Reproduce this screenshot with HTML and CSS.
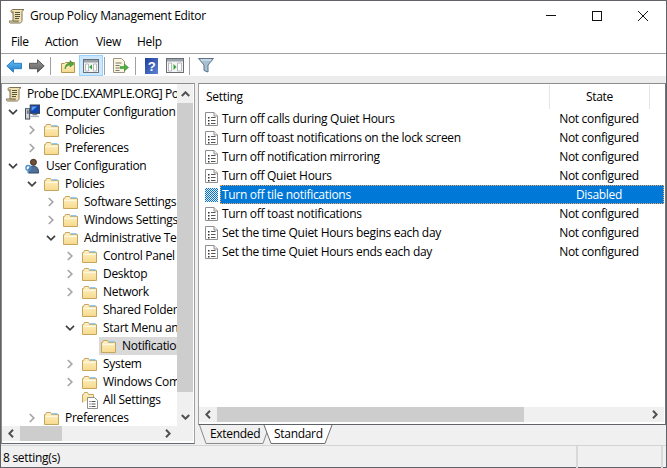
FILE: index.html
```html
<!DOCTYPE html>
<html lang="en">
<head>
<meta charset="utf-8">
<title>Group Policy Management Editor</title>
<link rel="stylesheet" href="styles.css">
</head>
<body>
<svg class="defs" aria-hidden="true">
  <defs>
    <linearGradient id="gf" x1="0" y1="0" x2="0" y2="1"><stop offset="0" stop-color="#fff2c8"/><stop offset="1" stop-color="#f6d98c"/></linearGradient>
    <linearGradient id="gb" x1="0" y1="0" x2="0" y2="1"><stop offset="0" stop-color="#6cc4f5"/><stop offset="1" stop-color="#1a78c8"/></linearGradient>
    <linearGradient id="gg" x1="0" y1="0" x2="0" y2="1"><stop offset="0" stop-color="#9a9a9a"/><stop offset="1" stop-color="#5c5c5c"/></linearGradient>
    <linearGradient id="gh" x1="0" y1="0" x2="1" y2="1"><stop offset="0" stop-color="#1e3f96"/><stop offset="1" stop-color="#5d83d8"/></linearGradient>
    <pattern id="dith" width="2" height="2" patternUnits="userSpaceOnUse"><rect width="2" height="2" fill="#0d6fc4"/><rect width="1" height="1" fill="#dfeefa"/><rect x="1" y="1" width="1" height="1" fill="#dfeefa"/></pattern>
    <symbol id="i-folder" viewBox="0 0 15 13">
      <path d="M.5 12.500V2.500h1l1-2h4l1 2h7v10z" fill="url(#gf)" stroke="#c6a55e"/>
      <path d="M8 1h5.500v1.500H8z" fill="#8ec8ee"/>
      <path d="M1.500 4.500h12" stroke="#fff8e0"/>
    </symbol>
    <symbol id="i-scroll" viewBox="0 0 16 16">
      <path d="M3.500 1.500h11.500c-1.500 1-2 2-2 3v8c0 1.500-1 2.500-2.500 2.500h-9c-1 0-1.500-1-1.500-2h8c.5 0 1 .5 1 1" fill="#f1e2b4" stroke="#7d7254"/>
      <path d="M3.500 1.500c-1 0-1.500 1-1.500 2 0 1 1 1.500 2 1.500M4 3v10h6" fill="#e8d6a0" stroke="#7d7254"/>
      <path d="M6 4.500h5M6 6.500h5M6 8.500h5M6 10.500h4" stroke="#55523f"/>
    </symbol>
    <symbol id="i-computer" viewBox="0 0 16 16">
      <rect x="5.500" y=".5" width="10" height="9" fill="#0e46b4" stroke="#3a424c"/>
      <path d="M7 2h6l-6 5z" fill="#5f9df0"/>
      <path d="M8 10h5v1.500H8z" fill="#6f7a86"/>
      <path d="M6 12h9v1.500H6z" fill="#aab2bb"/>
      <rect x=".5" y="4.500" width="4.500" height="11" fill="#cfd5dc" stroke="#3a424c"/>
      <path d="M2 7h2M2 9h2" stroke="#1f2a36"/>
    </symbol>
    <symbol id="i-user" viewBox="0 0 16 16">
      <circle cx="9" cy="4" r="3.200" fill="#6d5138" stroke="#3f2e1e"/>
      <path d="M3.500 15.500c0-5 2-7.500 5.500-7.500s5.500 2.500 5.500 7.500z" fill="#4f6f98" stroke="#2e4260"/>
      <circle cx="3.500" cy="10" r="2.500" fill="none" stroke="#4b93cf" stroke-width="1.500"/>
      <path d="M3.500 12v3.500" stroke="#4b93cf" stroke-width="1.500"/>
    </symbol>
    <symbol id="i-sheet" viewBox="0 0 13 14">
      <path d="M.5.500h8.500l3.500 3.500v9.500H.5z" fill="#fff" stroke="#8f8f8f"/>
      <path d="M9 .5v3.500h3.500" fill="#eee" stroke="#8f8f8f"/>
      <path d="M3 5h1.500v1.500H3zM3 8h1.500v1.500H3zM3 11h1.500v1.500H3z" fill="#333"/>
      <path d="M6 5.500h4.500M6 8.500h4.500M6 11.500h4.500" stroke="#555"/>
    </symbol>
    <symbol id="i-allset" viewBox="0 0 16 17">
      <path d="M.5 10.500V2.500h1l1-2h3l1 2h5v3" fill="url(#gf)" stroke="#c6a55e"/>
      <path d="M5.500 5.500h7l3 3v8h-10z" fill="#fff" stroke="#8f8f8f"/>
      <path d="M7.500 9h1v1h-1zM7.500 11.500h1v1h-1zM7.500 14h1v1h-1z" fill="#333"/>
      <path d="M9.500 9.500h4M9.500 12h4M9.500 14.500h4" stroke="#555"/>
    </symbol>
    <symbol id="c-down" viewBox="0 0 10 6"><path d="M1 .8l4 4 4-4" fill="none" stroke="#404040" stroke-width="1.700"/></symbol>
    <symbol id="c-right" viewBox="0 0 6 10"><path d="M.8 1l4 4-4 4" fill="none" stroke="#a6a6a6" stroke-width="1.700"/></symbol>
    <symbol id="s-up" viewBox="0 0 9 6"><path d="M.8 5l3.700-3.700L8.200 5" fill="none" stroke="#505050" stroke-width="2"/></symbol>
    <symbol id="s-down" viewBox="0 0 9 6"><path d="M.8 1l3.700 3.700L8.200 1" fill="none" stroke="#505050" stroke-width="2"/></symbol>
    <symbol id="s-left" viewBox="0 0 6 9"><path d="M5 .8L1.300 4.500 5 8.200" fill="none" stroke="#505050" stroke-width="2"/></symbol>
    <symbol id="s-right" viewBox="0 0 6 9"><path d="M1 .8l3.700 3.700L1 8.200" fill="none" stroke="#505050" stroke-width="2"/></symbol>
  </defs>
</svg>

<div class="window">
  <header class="titlebar">
    <svg class="ico-title"><use href="#i-scroll"/></svg>
    <span class="title-text">Group Policy Management Editor</span>
    <div class="caption">
      <span class="cap-btn"><svg class="cap-ico" viewBox="0 0 10 10"><path d="M0 4.500h10" stroke="#111"/></svg></span>
      <span class="cap-btn"><svg class="cap-ico" viewBox="0 0 10 10"><rect x=".5" y=".5" width="9" height="9" fill="none" stroke="#111"/></svg></span>
      <span class="cap-btn"><svg class="cap-ico" viewBox="0 0 10 10"><path d="M0 0l10 10M10 0L0 10" stroke="#111"/></svg></span>
    </div>
  </header>

  <nav class="menubar">
    <span class="menu-item">File</span>
    <span class="menu-item">Action</span>
    <span class="menu-item">View</span>
    <span class="menu-item">Help</span>
  </nav>

  <div class="toolbar">
    <span class="tool tool-back"><svg class="tool-ico" viewBox="0 0 16 14"><path d="M.8 7L7.500.8v3.500h8v5.400h-8v3.500z" fill="url(#gb)" stroke="#2f80c8"/></svg></span>
    <span class="tool tool-fwd"><svg class="tool-ico" viewBox="0 0 16 14"><path d="M15.200 7L8.500.8v3.500h-8v5.400h8v3.500z" fill="url(#gg)" stroke="#5a5a5a"/></svg></span>
    <span class="tool-sep sep-a"></span>
    <span class="tool tool-up"><svg class="tool-ico" viewBox="0 0 16 16"><path d="M1.500 14.500V5.500h3l1-1h9v10z" fill="url(#gf)" stroke="#b3954f"/><path d="M5 11c0-4 2-6 5-6V2.500l4 3.500-4 3V7c-2 0-3.500 1-5 4z" fill="#55a83c" stroke="#2e7d22" stroke-width=".5"/></svg></span>
    <span class="tool tool-on"><svg class="tool-ico" viewBox="0 0 16 14"><rect x=".5" y=".5" width="15" height="13" fill="#f4f4f4" stroke="#6a6f75"/><path d="M1 1h14v2.500H1z" fill="#9aa3ac"/><path d="M2.500 5h3v7h-3zM10.500 5h3v7h-3z" fill="#fff" stroke="#8c9298" stroke-width=".6"/><path d="M9 5.500v5L6 8z" fill="#35a435"/></svg></span>
    <span class="tool-sep sep-b"></span>
    <span class="tool tool-exp"><svg class="tool-ico" viewBox="0 0 16 15"><path d="M.5.500h8l3 3v11H.5z" fill="#fdf6df" stroke="#9b9585"/><path d="M2.500 5h6M2.500 7.500h4M2.500 10h4M2.500 12.500h4" stroke="#77756c"/><path d="M7 8.500h4.500V6l4 3.500-4 3.500v-2.500H7z" fill="#52b043" stroke="#2f8a2a" stroke-width=".5"/></svg></span>
    <span class="tool-sep sep-c"></span>
    <span class="tool tool-help"><svg class="tool-ico" viewBox="0 0 13 16"><rect width="13" height="16" fill="url(#gh)"/><text x="6.500" y="13" class="help-mark">?</text></svg></span>
    <span class="tool tool-act"><svg class="tool-ico" viewBox="0 0 18 15"><rect x=".5" y=".5" width="17" height="14" fill="#f4f4f4" stroke="#6a6f75"/><path d="M1 1h16v2.500H1z" fill="#9aa3ac"/><path d="M2.500 5h3v8h-3zM11.500 5h4v8h-4z" fill="#fff" stroke="#8c9298" stroke-width=".6"/><path d="M7.500 6v6L10.500 9z" fill="#35a435"/></svg></span>
    <span class="tool-sep sep-d"></span>
    <span class="tool tool-filter"><svg class="tool-ico" viewBox="0 0 16 15"><path d="M.5.500h15L10 7v7l-4-1.500V7z" fill="#a9c0d3" stroke="#5f7488"/><path d="M3 2h10" stroke="#e4eef5"/></svg></span>
  </div>
  <div class="band"></div>

  <main class="panes">
    <section class="pane pane-tree">
      <div class="tree-body">
        <div class="tree">
          <div class="node root"><svg class="n-ico scroll"><use href="#i-scroll"/></svg><span class="n-label">Probe [DC.EXAMPLE.ORG] Policy</span></div>
          <div class="node d1"><svg class="chev down"><use href="#c-down"/></svg><span class="n-main"><svg class="n-ico"><use href="#i-computer"/></svg><span class="n-label">Computer Configuration</span></span></div>
          <div class="node d2"><svg class="chev right"><use href="#c-right"/></svg><span class="n-main"><svg class="n-ico"><use href="#i-folder"/></svg><span class="n-label">Policies</span></span></div>
          <div class="node d2"><svg class="chev right"><use href="#c-right"/></svg><span class="n-main"><svg class="n-ico"><use href="#i-folder"/></svg><span class="n-label">Preferences</span></span></div>
          <div class="node d1"><svg class="chev down"><use href="#c-down"/></svg><span class="n-main"><svg class="n-ico"><use href="#i-user"/></svg><span class="n-label">User Configuration</span></span></div>
          <div class="node d2"><svg class="chev down"><use href="#c-down"/></svg><span class="n-main"><svg class="n-ico"><use href="#i-folder"/></svg><span class="n-label">Policies</span></span></div>
          <div class="node d3"><svg class="chev right"><use href="#c-right"/></svg><span class="n-main"><svg class="n-ico"><use href="#i-folder"/></svg><span class="n-label">Software Settings</span></span></div>
          <div class="node d3"><svg class="chev right"><use href="#c-right"/></svg><span class="n-main"><svg class="n-ico"><use href="#i-folder"/></svg><span class="n-label">Windows Settings</span></span></div>
          <div class="node d3"><svg class="chev down"><use href="#c-down"/></svg><span class="n-main"><svg class="n-ico"><use href="#i-folder"/></svg><span class="n-label">Administrative Templates</span></span></div>
          <div class="node d4"><svg class="chev right"><use href="#c-right"/></svg><span class="n-main"><svg class="n-ico"><use href="#i-folder"/></svg><span class="n-label">Control Panel</span></span></div>
          <div class="node d4"><svg class="chev right"><use href="#c-right"/></svg><span class="n-main"><svg class="n-ico"><use href="#i-folder"/></svg><span class="n-label">Desktop</span></span></div>
          <div class="node d4"><svg class="chev right"><use href="#c-right"/></svg><span class="n-main"><svg class="n-ico"><use href="#i-folder"/></svg><span class="n-label">Network</span></span></div>
          <div class="node d4"><span class="chev-blank"></span><span class="n-main"><svg class="n-ico"><use href="#i-folder"/></svg><span class="n-label">Shared Folders</span></span></div>
          <div class="node d4"><svg class="chev down"><use href="#c-down"/></svg><span class="n-main"><svg class="n-ico"><use href="#i-folder"/></svg><span class="n-label">Start Menu and Taskbar</span></span></div>
          <div class="node d5 sel"><span class="chev-blank"></span><span class="n-main"><svg class="n-ico"><use href="#i-folder"/></svg><span class="n-label">Notifications</span></span></div>
          <div class="node d4"><svg class="chev right"><use href="#c-right"/></svg><span class="n-main"><svg class="n-ico"><use href="#i-folder"/></svg><span class="n-label">System</span></span></div>
          <div class="node d4"><svg class="chev right"><use href="#c-right"/></svg><span class="n-main"><svg class="n-ico"><use href="#i-folder"/></svg><span class="n-label">Windows Components</span></span></div>
          <div class="node d4"><span class="chev-blank"></span><span class="n-main"><svg class="n-ico n-ico-all"><use href="#i-allset"/></svg><span class="n-label label-all">All Settings</span></span></div>
          <div class="node d2"><svg class="chev right"><use href="#c-right"/></svg><span class="n-main"><svg class="n-ico"><use href="#i-folder"/></svg><span class="n-label">Preferences</span></span></div>
        </div>
        <div class="vbar">
          <span class="sb-btn"><svg class="sb-h"><use href="#s-up"/></svg></span>
          <span class="vthumb"></span>
          <span class="vrest"></span>
          <span class="sb-btn"><svg class="sb-h"><use href="#s-down"/></svg></span>
        </div>
      </div>
      <div class="hbar hbar-tree">
        <span class="sb-btn-h"><svg class="sb-v"><use href="#s-left"/></svg></span>
        <span class="hthumb thumb-tree"></span>
        <span class="hrest"></span>
        <span class="sb-btn-h"><svg class="sb-v"><use href="#s-right"/></svg></span>
        <span class="corner"></span>
      </div>
    </section>

    <div class="right-col">
      <section class="pane pane-list">
        <div class="list-head">
          <span class="col-setting">Setting</span>
          <span class="col-state">State</span>
        </div>
        <div class="list">
          <div class="row"><svg class="r-ico"><use href="#i-sheet"/></svg><div class="r-body"><span class="r-name">Turn off calls during Quiet Hours</span><span class="r-state">Not configured</span></div></div>
          <div class="row"><svg class="r-ico"><use href="#i-sheet"/></svg><div class="r-body"><span class="r-name">Turn off toast notifications on the lock screen</span><span class="r-state">Not configured</span></div></div>
          <div class="row"><svg class="r-ico"><use href="#i-sheet"/></svg><div class="r-body"><span class="r-name">Turn off notification mirroring</span><span class="r-state">Not configured</span></div></div>
          <div class="row"><svg class="r-ico"><use href="#i-sheet"/></svg><div class="r-body"><span class="r-name">Turn off Quiet Hours</span><span class="r-state">Not configured</span></div></div>
          <div class="row selected"><svg class="r-ico" viewBox="0 0 13 14"><rect width="13" height="14" fill="url(#dith)"/></svg><div class="r-body"><span class="r-name">Turn off tile notifications</span><span class="r-state">Disabled</span></div></div>
          <div class="row"><svg class="r-ico"><use href="#i-sheet"/></svg><div class="r-body"><span class="r-name">Turn off toast notifications</span><span class="r-state">Not configured</span></div></div>
          <div class="row"><svg class="r-ico"><use href="#i-sheet"/></svg><div class="r-body"><span class="r-name">Set the time Quiet Hours begins each day</span><span class="r-state">Not configured</span></div></div>
          <div class="row"><svg class="r-ico"><use href="#i-sheet"/></svg><div class="r-body"><span class="r-name">Set the time Quiet Hours ends each day</span><span class="r-state">Not configured</span></div></div>
        </div>
        <div class="hbar hbar-list">
          <span class="sb-btn-h"><svg class="sb-v"><use href="#s-left"/></svg></span>
          <span class="hthumb thumb-list"></span>
          <span class="hrest"></span>
          <span class="sb-btn-h"><svg class="sb-v"><use href="#s-right"/></svg></span>
        </div>
      </section>
      <div class="tabs">
        <span class="tab tab-ext">
          <svg class="tab-shape" viewBox="0 0 72 19"><path d="M.5 0L7 18.500H64L70.500 0" fill="#f0f0f0" stroke="#8a8a8a"/></svg>
          <span class="tab-text">Extended</span>
        </span>
        <span class="tab tab-std">
          <svg class="tab-shape" viewBox="0 0 70 19"><path d="M1 0L8 18.500H62L69 0" fill="#fff" stroke="#6e6e6e"/></svg>
          <span class="tab-text">Standard</span>
        </span>
      </div>
    </div>
  </main>

  <footer class="status">
    <span class="st-main">8 setting(s)</span>
    <span class="st-mid"></span>
    <span class="st-end"></span>
  </footer>
</div>
</body>
</html>
```

FILE: styles.css
```css
* { box-sizing: border-box; }
html, body { margin: 0; padding: 0; background: #f0f0f0; overflow: hidden; }
body { font: 12px/16px "Open Sans", "Liberation Sans", sans-serif; color: #000; letter-spacing: -0.3px; }
.defs { width: 0; height: 0; display: block; overflow: hidden; }

.window {
  width: 667px; height: 468px; display: flex; flex-direction: column;
  border: 1px solid #5f6368; background: #f0f0f0;
}

.titlebar { height: 29px; flex: none; display: flex; align-items: center; background: #fff; padding-left: 8px; }
.ico-title { width: 16px; height: 16px; flex: none; }
.title-text { margin-left: 5px; padding-top: 1px; }
.caption { margin-left: auto; display: flex; }
.cap-btn { width: 46px; height: 29px; display: flex; align-items: center; justify-content: center; }
.cap-ico { width: 10px; height: 10px; }

.menubar { height: 24px; flex: none; background: #fff; display: flex; align-items: center; padding: 1px 0 0 10px; border-bottom: 1px solid #a0a0a0; }
.menu-item:nth-child(1) { width: 34px; }
.menu-item:nth-child(2) { width: 51px; }
.menu-item:nth-child(3) { width: 41px; }

.toolbar { height: 22px; flex: none; background: #fff; display: flex; align-items: center; padding: 1px 0 0 4px; }
.tool { height: 21px; display: flex; align-items: center; justify-content: center; flex: none; }
.tool-ico { display: block; }
.tool-back { width: 18px; }
.tool-back .tool-ico, .tool-fwd .tool-ico { width: 16px; height: 14px; }
.tool-fwd { width: 18px; margin-left: 5px; }
.tool-sep { width: 1px; height: 18px; background: #a0a0a0; flex: none; }
.sep-a { margin-left: 4px; }
.tool-up { width: 16px; margin-left: 9px; }
.tool-up .tool-ico { width: 16px; height: 16px; }
.tool-on { width: 24px; margin-left: 3px; background: #cce8ff; border: 1px solid #99d1ff; }
.tool-on .tool-ico { width: 16px; height: 14px; }
.sep-b { margin-left: 1px; }
.tool-exp { width: 16px; margin-left: 8px; }
.tool-exp .tool-ico { width: 16px; height: 15px; }
.sep-c { margin-left: 6px; }
.tool-help { width: 13px; margin-left: 9px; }
.tool-help .tool-ico { width: 13px; height: 16px; }
.help-mark { font: bold 13px "Liberation Sans", sans-serif; fill: #fff; text-anchor: middle; }
.tool-act { width: 18px; margin-left: 8px; }
.tool-act .tool-ico { width: 18px; height: 15px; }
.sep-d { margin-left: 5px; }
.tool-filter { width: 16px; margin-left: 8px; }
.tool-filter .tool-ico { width: 16px; height: 15px; }

.band { height: 7px; flex: none; background: #ececec; }

.panes { flex: none; height: 361px; display: flex; gap: 3px; background: #f0f0f0; }
.pane { background: #fff; border: 1px solid #a0a0a0; }

.pane-tree { width: 194px; flex: none; display: flex; flex-direction: column; border-color: #8c8c8c #a0a0a0 #646970 #8c8c8c; }
.tree-body { flex: none; height: 342px; display: flex; padding-right: 1px; }
.tree { width: 175px; flex: none; overflow: hidden; white-space: nowrap; }

.node { height: 18px; display: flex; align-items: center; }
.node.root { height: 19px; padding-left: 4px; letter-spacing: -0.42px; }
.d1 { padding-left: 4px; }
.d2 { padding-left: 23px; }
.d3 { padding-left: 42px; }
.d4 { padding-left: 61px; }
.d5 { padding-left: 80px; }

.chev, .chev-blank { width: 14px; flex: none; }
.chev.down { height: 6px; }
.chev.right { height: 10px; }
.n-main { display: flex; align-items: center; flex: 1; height: 100%; margin-left: 3px; padding-left: 2px; min-width: 0; }
.n-ico { width: 15px; height: 13px; flex: none; }
.n-ico.scroll { width: 16px; height: 16px; }
.d1 .n-ico { width: 15px; height: 16px; }
.n-ico.n-ico-all { width: 16px; height: 17px; }
.n-label { margin-left: 6px; }
.n-label.label-all { margin-left: 5px; }
.root .n-label { margin-left: 5px; }
.sel .n-main { background: #d9d9d9; }

.vbar { width: 16px; flex: none; display: flex; flex-direction: column; background: #f0f0f0; }
.sb-btn { height: 19px; flex: none; display: flex; align-items: center; justify-content: center; }
.sb-h { width: 9px; height: 6px; }
.vthumb { height: 289px; flex: none; background: #cdcdcd; }
.vrest { flex: 1; }

.hbar { height: 15px; flex: none; display: flex; background: #f0f0f0; }
.hbar-tree { width: 191px; margin-bottom: 2px; }
.sb-btn-h { width: 18px; flex: none; display: flex; align-items: center; justify-content: center; }
.sb-v { width: 6px; height: 9px; }
.hthumb { background: #cdcdcd; flex: none; }
.thumb-tree { width: 42px; }
.hrest { flex: 1; }
.corner { width: 16px; flex: none; }

.right-col { flex: 1; min-width: 0; display: flex; flex-direction: column; }
.pane-list { height: 342px; flex: none; display: flex; flex-direction: column; border-color: #8c8c8c #6f7377 #5f6368 #a0a0a0; }

.list-head { height: 25px; flex: none; display: flex; padding-top: 1px; }
.col-setting { width: 351px; padding-left: 7px; height: 24px; line-height: 24px; border-right: 1px solid #e5e5e5; }
.col-state { width: 100px; text-align: center; height: 24px; line-height: 24px; border-right: 1px solid #e5e5e5; }

.list { flex: 1; }
.row { height: 19px; display: flex; align-items: center; padding-left: 6px; }
.r-ico { width: 13px; height: 14px; flex: none; }
.r-body { flex: 1; margin-left: 2px; margin-right: 1px; height: 100%; display: flex; align-items: center; white-space: nowrap; }
.r-name { width: 329px; flex: none; padding-left: 2px; overflow: hidden; }
.r-state { width: 100px; flex: none; text-align: center; }
.selected .r-body { background: #0078d7; color: #fff; outline: 1px dotted #e9a860; outline-offset: -1px; }

.hbar-list { margin: 0 1px 2px 0; }
.thumb-list { width: 307px; }

.tabs { flex: 1; display: flex; padding-left: 1px; }
.tab { position: relative; height: 19px; display: block; flex: none; }
.tab-ext { width: 72px; }
.tab-std { width: 70px; margin-left: -8px; }
.tab-shape { position: absolute; left: 0; top: 0; width: 100%; height: 100%; }
.tab-text { position: relative; display: block; line-height: 18px; padding-left: 11px; }

.status { flex: 1; display: flex; border-top: 1px solid #d4d4d4; margin-top: 1px; }
.st-main { width: 577px; padding-left: 2px; line-height: 24px; border-right: 2px solid #d9d9d9; flex: none; }
.st-mid { width: 85px; flex: none; border-right: 2px solid #d9d9d9; }
.st-end { flex: 1; }
```
